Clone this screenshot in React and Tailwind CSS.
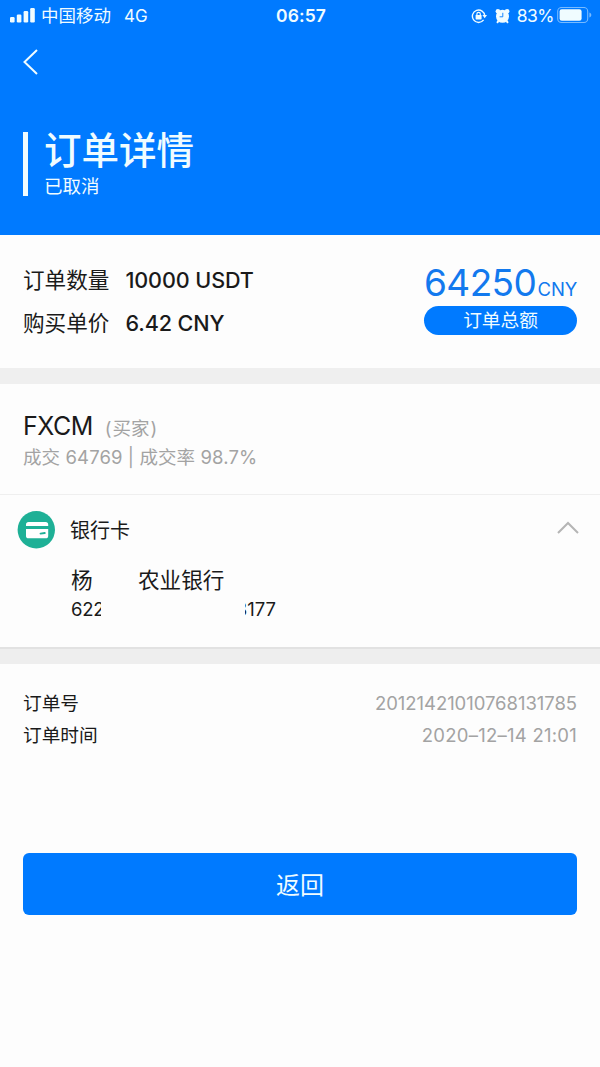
function StatusBar() {
	return (
		<div className="flex h-[31px] items-center text-[18px] leading-[31px]">
			<div className="flex flex-1 items-center pl-[10px]">
				<svg width="25" height="16" viewBox="0 0 25 16" fill="currentColor">
					<rect x="0" y="9" width="4.6" height="5.5" rx="1.2" />
					<rect x="6.8" y="6.5" width="4.6" height="8" rx="1.2" />
					<rect x="13.6" y="3" width="4.6" height="11.5" rx="1.2" />
					<rect x="20.2" y="0" width="4.6" height="14.5" rx="1.2" />
				</svg>
				<span className="ml-[6px] text-[17.5px]">中国移动</span>
				<span className="mt-px ml-[13px] text-[17px]">4G</span>
			</div>
			<span className="text-[17.5px] font-semibold tracking-[0.1px]">06:57</span>
			<div className="flex flex-1 items-center justify-end pr-[8px]">
				<svg width="16" height="16" viewBox="0 0 16 16" fill="none" stroke="currentColor" strokeWidth="1.4">
					<path d="M12.6 11.9A6.2 6.2 0 1 1 13.8 8" />
					<path d="M11.4 7h4.6l-2.3 3.2z" fill="currentColor" stroke="none" />
					<rect x="4.6" y="7" width="6" height="4.4" rx="0.6" fill="currentColor" stroke="none" />
					<path d="M5.9 7.2V6a1.7 1.7 0 0 1 3.4 0v1.2" strokeWidth="1.2" />
				</svg>
				<svg className="ml-[8px]" width="15" height="16" viewBox="0 0 15 16">
					<g fill="currentColor">
						<circle cx="7.5" cy="8.3" r="6.5" />
						<circle cx="2.9" cy="3.2" r="2.3" />
						<circle cx="12.1" cy="3.2" r="2.3" />
						<path d="M2.3 12.2l2 1.4-1.5 1.9-1.4-1zM12.7 12.2l-2 1.4 1.5 1.9 1.4-1z" />
					</g>
					<path d="M7.8 4.8v4H4.6" fill="none" stroke="#007aff" strokeWidth="0.9" />
				</svg>
				<span className="ml-[7px] text-[17.5px] tracking-[-0.5px]">83%</span>
				<svg className="ml-[3px]" width="35" height="17" viewBox="0 0 35 17">
					<rect x="0.7" y="0.5" width="30" height="15" rx="3.8" fill="none" stroke="currentColor" strokeOpacity="0.5" strokeWidth="1.1" />
					<rect x="2.6" y="2.3" width="22" height="11.4" rx="2.2" fill="currentColor" />
					<path d="M32.4 5.5v5c1.3-.5 1.9-1.4 1.9-2.5s-.6-2-1.9-2.5z" fill="currentColor" fillOpacity="0.5" />
				</svg>
			</div>
		</div>
	);
}

function Header() {
	return (
		<header className="h-[235px] bg-[#007aff] text-[#f0fcff]">
			<StatusBar />
			<button type="button" className="mt-[17px] ml-[22px] block">
				<svg width="17" height="28" viewBox="0 0 17 28" fill="none" stroke="currentColor" strokeWidth="2">
					<path d="M15 2L2.5 14L15 26" />
				</svg>
			</button>
			<div className="mt-[56px] ml-[23px] flex h-[64px] border-l-[5px] border-current pl-[16px]">
				<div>
					<h1 className="h-[42px] text-[37.5px] leading-[38px] font-medium">订单详情</h1>
					<p className="text-[18.5px] leading-[24px]">已取消</p>
				</div>
			</div>
		</header>
	);
}

function SummaryRow({ label, value }) {
	return (
		<div className="flex h-[43px] items-center text-[21.6px] leading-[43px]">
			<span>{label}</span>
			<span className="ml-[16px] font-medium tracking-[-0.1px]">{value}</span>
		</div>
	);
}

function InfoRow({ label, value, valueClass }) {
	return (
		<div className="flex h-[32px] items-center justify-between leading-[32px]">
			<span className="mt-[2px] text-[18.7px]">{label}</span>
			<span className={`text-[18.5px] text-[#a3a3a3] ${valueClass}`}>{value}</span>
		</div>
	);
}

function App() {
	return (
		<div className="min-h-[1067px] w-[600px] bg-[#fdfdfd] font-['Inter','Noto_Sans_CJK_SC',sans-serif] whitespace-nowrap text-[#1a1a1a]">
			<Header />

			<section className="flex h-[133px] justify-between px-[23px] pt-[24px]">
				<div>
					<SummaryRow label="订单数量" value="10000 USDT" />
					<SummaryRow label="购买单价" value="6.42 CNY" />
				</div>
				<div className="w-[153px]">
					<div className="flex h-[47px] items-baseline justify-between text-[#1279ee]">
						<span className="text-[37px] leading-[48px] tracking-[-0.6px]">64250</span>
						<span className="text-[18.5px] tracking-[-0.2px]">CNY</span>
					</div>
					<div className="h-[29px] rounded-full bg-[#007aff] text-center text-[18.7px] leading-[30px] text-[#f0fcff]">
						订单总额
					</div>
				</div>
			</section>

			<div className="h-[16px] bg-[#efefef]" />

			<section className="h-[111px] border-b border-[#efefef] px-[23px] pt-[26px]">
				<div className="flex h-[32px] items-baseline leading-[32px]">
					<span className="text-[25px] tracking-[-0.5px]">FXCM</span>
					<span className="ml-[12px] flex text-[18.5px] text-[#a3a3a3]">
						<span>(</span>
						<span className="mx-px">买家</span>
						<span>)</span>
					</span>
				</div>
				<p className="text-[18.5px] leading-[30px] tracking-[0.1px] text-[#a3a3a3]">成交 64769 | 成交率 98.7%</p>
			</section>

			<section className="h-[152px] pt-[16px]">
				<div className="flex h-[38px] items-center pr-[21px] pl-[17px]">
					<svg width="38" height="38" viewBox="0 0 38 38">
						<circle cx="19.3" cy="18.8" r="18.7" fill="#1eb096" />
						<path d="M9 15v-1.4a2.6 2.6 0 0 1 2.6-2.6h17a2.6 2.6 0 0 1 2.6 2.6v1.4z" fill="#fff" />
						<path d="M9 18h22.2v6.7a2.6 2.6 0 0 1-2.6 2.6h-17a2.6 2.6 0 0 1-2.6-2.6z" fill="#fff" />
						<path d="M23.5 22.6l4.3-.6" stroke="#1eb096" strokeWidth="1.8" strokeLinecap="round" />
					</svg>
					<span className="mt-[2px] ml-[15px] flex-1 text-[20px]">银行卡</span>
					<svg className="mb-[6px]" width="22" height="13" viewBox="0 0 22 13" fill="none" stroke="#b5b5b5" strokeWidth="2">
						<path d="M1 12L11 2L21 12" />
					</svg>
				</div>
				<div className="mt-[15px] ml-[71px] flex h-[31px] text-[21.6px] leading-[32px]">
					<span className="w-[67px]">杨</span>
					<span>农业银行</span>
				</div>
				<div className="ml-[71px] flex h-[28px] text-[18.5px] leading-[28px]">
					<span className="w-[30px] overflow-hidden tracking-[-0.3px]">622</span>
					<span className="ml-[144px] flex w-[31px] justify-end overflow-hidden">8177</span>
				</div>
			</section>

			<div className="h-[17px] border-t-2 border-[#e2e2e2] bg-[#eeeeee]" />

			<section className="px-[23px] pt-[23px]">
				<InfoRow label="订单号" value="20121421010768131785" valueClass="tracking-[-0.05px]" />
				<InfoRow label="订单时间" value="2020–12–14 21:01" valueClass="tracking-[0.25px]" />
				<button
					type="button"
					className="mt-[102px] block h-[62px] w-full rounded-md bg-[#007aff] pt-[3px] text-[24px] text-[#f0fcff]"
				>
					返回
				</button>
			</section>
		</div>
	);
}

export default App;
